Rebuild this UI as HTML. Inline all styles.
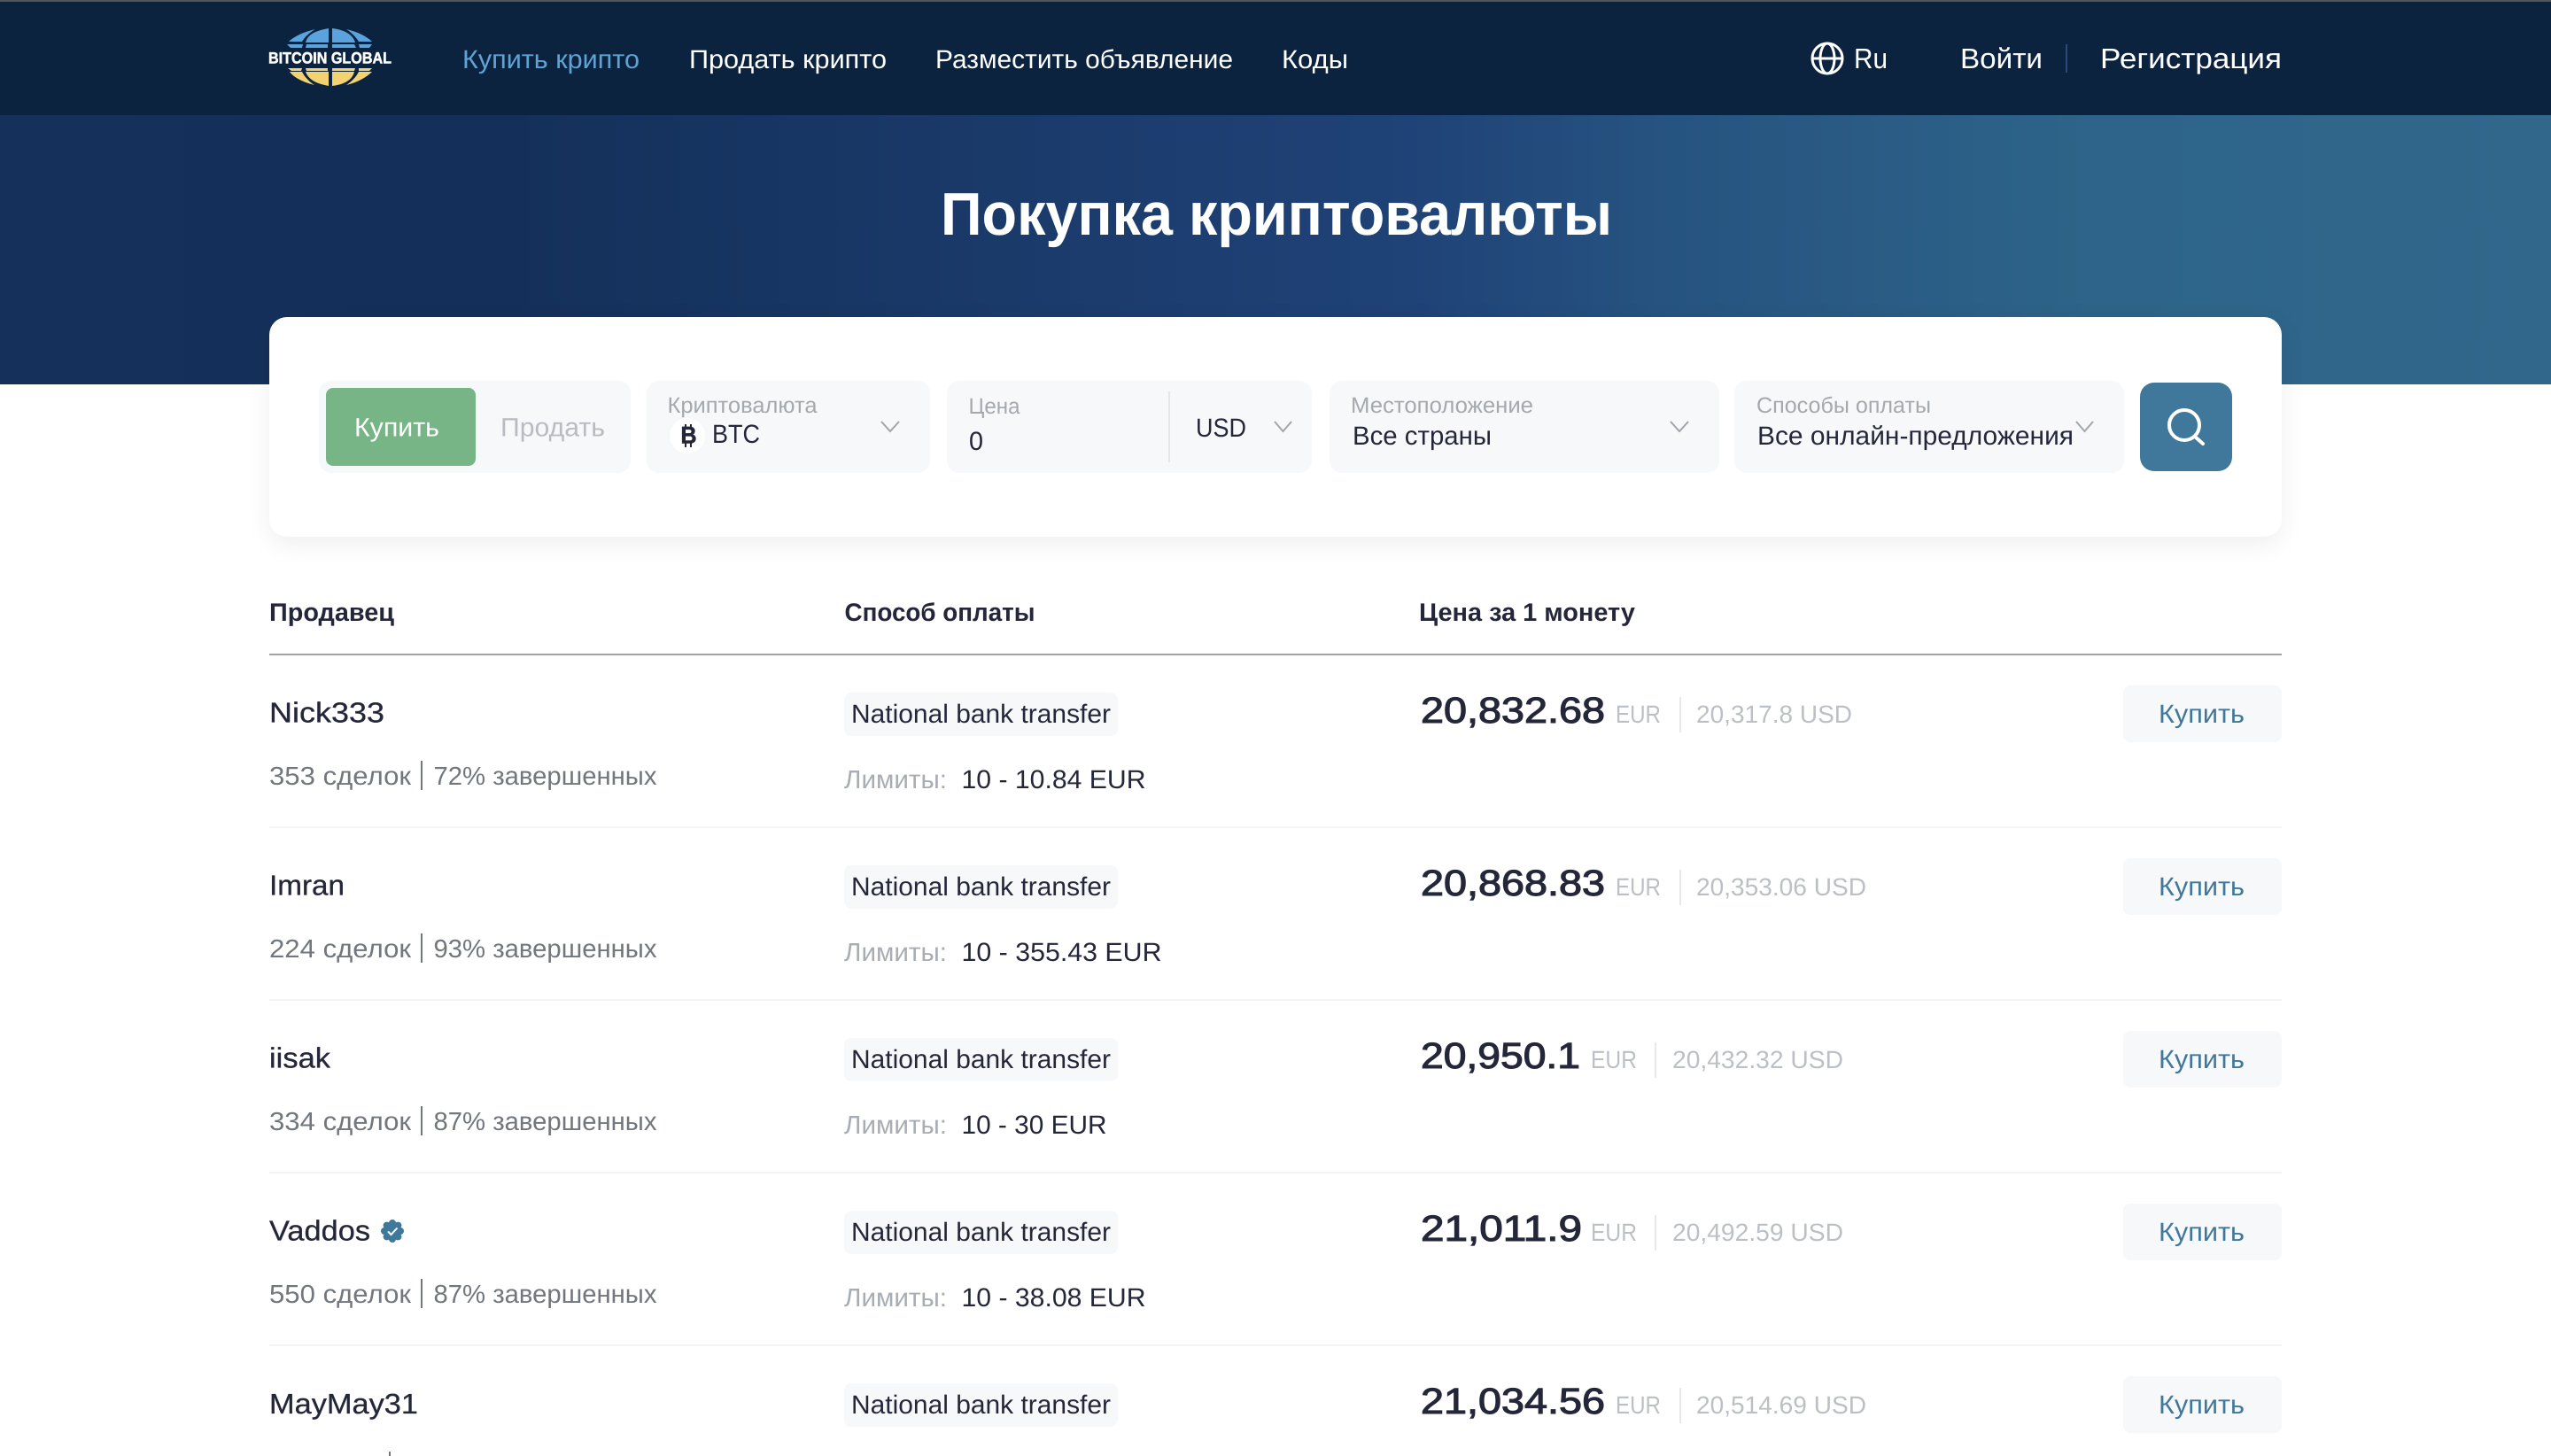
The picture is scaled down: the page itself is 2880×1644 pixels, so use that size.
<!DOCTYPE html>
<html lang="ru"><head><meta charset="utf-8"><title>Покупка криптовалюты</title>
<style>
html,body{margin:0;padding:0;background:#fff}
body{width:2880px;height:1644px;overflow:hidden;position:relative;font-family:"Liberation Sans",sans-serif}
#top{position:absolute;left:0;top:0;width:2880px;height:2px;background:#555}
#hd{position:absolute;left:0;top:2px;width:2880px;height:128px;background:#0c2340}
#hero{position:absolute;left:0;top:130px;width:2880px;height:304px;background:linear-gradient(90deg,#15315b 0%,#14305a 20%,#1f4277 55%,#265380 65%,#2e6489 82%,#30678b 100%)}
#card{position:absolute;left:304px;top:358px;width:2272px;height:248px;background:#fff;border-radius:20px;box-shadow:0 8px 30px rgba(0,0,0,.07)}
svg{position:absolute;left:0;top:0}
text{font-family:"Liberation Sans",sans-serif;text-rendering:geometricPrecision}
.nav{font-size:29.5px;fill:#fff}
.nr{font-size:32px;fill:#fff}
.lb{font-size:25px;fill:#a4a9ae}
.v{font-size:29.5px;fill:#24273a}
.th{font-size:28.5px;font-weight:700;fill:#24273a}
.nm{font-size:32px;fill:#24273a;stroke:#24273a;stroke-width:.3px}
.st{font-size:29px;fill:#72777d}
.ch{font-size:29.5px;fill:#24273a}
.lm{font-size:29px;fill:#a8adb3}
.lv{font-size:29.5px;fill:#24273a}
.pr{font-size:41px;fill:#24273a;stroke:#24273a;stroke-width:1.1px}
.cu{font-size:28px;fill:#bcc0c5}
.bt{font-size:29.5px;fill:#40789c}
.chev{fill:none;stroke:#a0a5aa;stroke-width:2}
</style></head><body>
<div id="top"></div><div id="hd"></div><div id="hero"></div><div id="card"></div>
<svg width="2880" height="1644" viewBox="0 0 2880 1644" xmlns="http://www.w3.org/2000/svg">
<!-- logo -->
<g fill="#5ba3dc">
<path d="M345 48C347 40 354 35 371 32V48Z"/><path d="M375 32C392 34 399 41 401 48H375Z"/>
<path d="M326 47C332 41 343 36 356 33C349 37 344 42 341 47Z"/><path d="M391 33C404 36 414 41 420 47H405C402 42 397 37 391 33Z"/>
<path d="M324 50H342L341 54H328Z"/><path d="M346 50H370V54H345Z"/><path d="M375 50H400L402 54H375Z"/><path d="M405 50H420L417 54H406Z"/>
</g>
<g fill="#f3d272">
<path d="M345 81C348 89 355 94 371 97V81Z"/><path d="M375 97C391 95 398 89 400 81H375Z"/>
<path d="M327 81C332 88 343 93 355 96C349 92 344 87 341 81Z"/><path d="M391 96C404 93 414 87 420 81H405C402 87 397 92 391 96Z"/>
<path d="M325 77H341L340 80H329Z"/><path d="M345 77H370V80H346Z"/><path d="M375 77H401L400 80H375Z"/><path d="M405 77H420L417 80H405Z"/>
</g>
<text x="303" y="71.500" font-size="18" font-weight="700" fill="#fff" stroke="#fff" stroke-width=".5" textLength="139" lengthAdjust="spacingAndGlyphs">BITCOIN GLOBAL</text>
<!-- nav -->
<text class="nav" x="522" y="77" style="fill:#5fa3d4" textLength="200" lengthAdjust="spacingAndGlyphs">Купить крипто</text>
<text class="nav" x="778" y="77" textLength="223" lengthAdjust="spacingAndGlyphs">Продать крипто</text>
<text class="nav" x="1056" y="77" textLength="336" lengthAdjust="spacingAndGlyphs">Разместить объявление</text>
<text class="nav" x="1447" y="77" textLength="75" lengthAdjust="spacingAndGlyphs">Коды</text>
<g fill="none" stroke="#fff" stroke-width="3"><circle cx="2063" cy="66" r="17"/><ellipse cx="2063" cy="66" rx="8" ry="17"/><path d="M2046 66H2080"/></g>
<text class="nr" x="2093" y="77" textLength="38" lengthAdjust="spacingAndGlyphs">Ru</text>
<text class="nr" x="2213" y="77" textLength="93" lengthAdjust="spacingAndGlyphs">Войти</text>
<rect x="2332" y="50" width="2" height="32" fill="#2a4a7f"/>
<text class="nr" x="2371" y="77" textLength="205" lengthAdjust="spacingAndGlyphs">Регистрация</text>
<!-- title -->
<text x="1062" y="265" font-size="68" font-weight="700" fill="#fff" textLength="758" lengthAdjust="spacingAndGlyphs">Покупка криптовалюты</text>
<!-- filter -->
<rect x="360" y="430" width="352" height="104" rx="14" fill="#f7f8fa"/>
<rect x="368" y="438" width="169" height="88" rx="8" fill="#77b586"/>
<text x="400" y="492.500" font-size="29.500" fill="#fff" textLength="96" lengthAdjust="spacingAndGlyphs">Купить</text>
<text x="565" y="492.500" font-size="29.500" fill="#b8bcc2" textLength="118" lengthAdjust="spacingAndGlyphs">Продать</text>
<rect x="730" y="430" width="320" height="104" rx="14" fill="#f7f8fa"/>
<text class="lb" x="753.500" y="466" textLength="169" lengthAdjust="spacingAndGlyphs">Криптовалюта</text>
<circle cx="776" cy="492" r="20" fill="#fff"/>
<text x="768.500" y="500.500" font-size="27" font-weight="700" fill="#24273a" stroke="#24273a" stroke-width=".6" textLength="18" lengthAdjust="spacingAndGlyphs">B</text>
<path d="M774 479V485M780 479V485M774 499V505M780 499V505" stroke="#24273a" stroke-width="2"/>
<text class="v" x="804" y="500" textLength="54" lengthAdjust="spacingAndGlyphs">BTC</text>
<path class="chev" d="M995 476L1005 487L1015 476"/>
<rect x="1069" y="430" width="412" height="104" rx="14" fill="#f7f8fa"/>
<text class="lb" x="1093.500" y="467" textLength="58" lengthAdjust="spacingAndGlyphs">Цена</text>
<text class="v" x="1094" y="508" textLength="16" lengthAdjust="spacingAndGlyphs">0</text>
<rect x="1319" y="442" width="2" height="80" fill="#e3e6ea"/>
<text class="v" x="1350" y="493" textLength="57" lengthAdjust="spacingAndGlyphs">USD</text>
<path class="chev" d="M1439 476L1448.500 487L1458 476"/>
<rect x="1501" y="430" width="440" height="104" rx="14" fill="#f7f8fa"/>
<text class="lb" x="1525" y="466" textLength="206" lengthAdjust="spacingAndGlyphs">Местоположение</text>
<text class="v" x="1527" y="502" textLength="157" lengthAdjust="spacingAndGlyphs">Все страны</text>
<path class="chev" d="M1886 476L1896 487L1906 476"/>
<rect x="1958" y="430" width="440" height="104" rx="14" fill="#f7f8fa"/>
<text class="lb" x="1983" y="466" textLength="197" lengthAdjust="spacingAndGlyphs">Способы оплаты</text>
<text class="v" x="1984" y="502" textLength="357" lengthAdjust="spacingAndGlyphs">Все онлайн-предложения</text>
<path class="chev" d="M2344 476L2353.500 487L2363 476"/>
<rect x="2416" y="432" width="104" height="100" rx="16" fill="#40789c"/>
<circle cx="2466" cy="480" r="17" fill="none" stroke="#fff" stroke-width="4"/>
<path d="M2478 493L2487 501" stroke="#fff" stroke-width="4" stroke-linecap="round"/>
<!-- table head -->
<text class="th" x="304" y="701" textLength="141" lengthAdjust="spacingAndGlyphs">Продавец</text>
<text class="th" x="953.500" y="701" textLength="215" lengthAdjust="spacingAndGlyphs">Способ оплаты</text>
<text class="th" x="1602" y="701" textLength="244" lengthAdjust="spacingAndGlyphs">Цена за 1 монету</text>
<rect x="304" y="738" width="2272" height="2" fill="#a0a4a8"/>
<!-- row 1 -->
<g>
<text class="nm" x="304" y="815.500" textLength="130" lengthAdjust="spacingAndGlyphs">Nick333</text>
<text class="st" x="304" y="886" textLength="160" lengthAdjust="spacingAndGlyphs">353 сделок</text><rect x="475" y="859" width="2" height="33" fill="#72777d"/><text class="st" x="489.500" y="886" textLength="252" lengthAdjust="spacingAndGlyphs">72% завершенных</text>
<rect x="953" y="782" width="309" height="49" rx="8" fill="#f7f8fa"/><text class="ch" x="961" y="816" textLength="293" lengthAdjust="spacingAndGlyphs">National bank transfer</text>
<text class="lm" x="953" y="890" textLength="116" lengthAdjust="spacingAndGlyphs">Лимиты:</text><text class="lv" x="1085.500" y="890" textLength="208" lengthAdjust="spacingAndGlyphs">10 - 10.84 EUR</text>
<text class="pr" x="1604" y="816" textLength="208" lengthAdjust="spacingAndGlyphs">20,832.68</text><text class="cu" x="1824" y="816" textLength="51" lengthAdjust="spacingAndGlyphs">EUR</text><rect x="1896" y="787" width="2" height="40" fill="#e6e8ea"/><text class="cu" x="1915" y="816" textLength="176" lengthAdjust="spacingAndGlyphs">20,317.8 USD</text>
<rect x="2397" y="774" width="179" height="64" rx="8" fill="#f7f8fa"/><text class="bt" x="2437" y="816" textLength="97" lengthAdjust="spacingAndGlyphs">Купить</text>
<rect x="304" y="933" width="2272" height="2" fill="#f4f5f6"/>
</g>
<!-- row 2 -->
<g transform="translate(0,195)">
<text class="nm" x="304" y="815.500" textLength="85" lengthAdjust="spacingAndGlyphs">Imran</text>
<text class="st" x="304" y="886" textLength="160" lengthAdjust="spacingAndGlyphs">224 сделок</text><rect x="475" y="859" width="2" height="33" fill="#72777d"/><text class="st" x="489.500" y="886" textLength="252" lengthAdjust="spacingAndGlyphs">93% завершенных</text>
<rect x="953" y="782" width="309" height="49" rx="8" fill="#f7f8fa"/><text class="ch" x="961" y="816" textLength="293" lengthAdjust="spacingAndGlyphs">National bank transfer</text>
<text class="lm" x="953" y="890" textLength="116" lengthAdjust="spacingAndGlyphs">Лимиты:</text><text class="lv" x="1085.500" y="890" textLength="226" lengthAdjust="spacingAndGlyphs">10 - 355.43 EUR</text>
<text class="pr" x="1604" y="816" textLength="208" lengthAdjust="spacingAndGlyphs">20,868.83</text><text class="cu" x="1824" y="816" textLength="51" lengthAdjust="spacingAndGlyphs">EUR</text><rect x="1896" y="787" width="2" height="40" fill="#e6e8ea"/><text class="cu" x="1915" y="816" textLength="192" lengthAdjust="spacingAndGlyphs">20,353.06 USD</text>
<rect x="2397" y="774" width="179" height="64" rx="8" fill="#f7f8fa"/><text class="bt" x="2437" y="816" textLength="97" lengthAdjust="spacingAndGlyphs">Купить</text>
<rect x="304" y="933" width="2272" height="2" fill="#f4f5f6"/>
</g>
<!-- row 3 -->
<g transform="translate(0,390)">
<text class="nm" x="304" y="815.500" textLength="69" lengthAdjust="spacingAndGlyphs">iisak</text>
<text class="st" x="304" y="886" textLength="160" lengthAdjust="spacingAndGlyphs">334 сделок</text><rect x="475" y="859" width="2" height="33" fill="#72777d"/><text class="st" x="489.500" y="886" textLength="252" lengthAdjust="spacingAndGlyphs">87% завершенных</text>
<rect x="953" y="782" width="309" height="49" rx="8" fill="#f7f8fa"/><text class="ch" x="961" y="816" textLength="293" lengthAdjust="spacingAndGlyphs">National bank transfer</text>
<text class="lm" x="953" y="890" textLength="116" lengthAdjust="spacingAndGlyphs">Лимиты:</text><text class="lv" x="1085.500" y="890" textLength="164" lengthAdjust="spacingAndGlyphs">10 - 30 EUR</text>
<text class="pr" x="1604" y="816" textLength="180" lengthAdjust="spacingAndGlyphs">20,950.1</text><text class="cu" x="1796" y="816" textLength="52" lengthAdjust="spacingAndGlyphs">EUR</text><rect x="1868" y="787" width="2" height="40" fill="#e6e8ea"/><text class="cu" x="1888" y="816" textLength="193" lengthAdjust="spacingAndGlyphs">20,432.32 USD</text>
<rect x="2397" y="774" width="179" height="64" rx="8" fill="#f7f8fa"/><text class="bt" x="2437" y="816" textLength="97" lengthAdjust="spacingAndGlyphs">Купить</text>
<rect x="304" y="933" width="2272" height="2" fill="#f4f5f6"/>
</g>
<!-- row 4 -->
<g transform="translate(0,585)">
<text class="nm" x="304" y="815.500" textLength="114" lengthAdjust="spacingAndGlyphs">Vaddos</text>
<g fill="#40789c"><circle cx="443" cy="805" r="10.500"/><circle cx="443" cy="796" r="4"/><circle cx="443" cy="814" r="4"/><circle cx="434" cy="805" r="4"/><circle cx="452" cy="805" r="4"/><circle cx="436.600" cy="798.600" r="4"/><circle cx="449.400" cy="798.600" r="4"/><circle cx="436.600" cy="811.400" r="4"/><circle cx="449.400" cy="811.400" r="4"/></g>
<path d="M438 805.500L441.500 809L448.500 801.500" fill="none" stroke="#fff" stroke-width="2"/>
<text class="st" x="304" y="886" textLength="160" lengthAdjust="spacingAndGlyphs">550 сделок</text><rect x="475" y="859" width="2" height="33" fill="#72777d"/><text class="st" x="489.500" y="886" textLength="252" lengthAdjust="spacingAndGlyphs">87% завершенных</text>
<rect x="953" y="782" width="309" height="49" rx="8" fill="#f7f8fa"/><text class="ch" x="961" y="816" textLength="293" lengthAdjust="spacingAndGlyphs">National bank transfer</text>
<text class="lm" x="953" y="890" textLength="116" lengthAdjust="spacingAndGlyphs">Лимиты:</text><text class="lv" x="1085.500" y="890" textLength="208" lengthAdjust="spacingAndGlyphs">10 - 38.08 EUR</text>
<text class="pr" x="1604" y="816" textLength="182" lengthAdjust="spacingAndGlyphs">21,011.9</text><text class="cu" x="1796" y="816" textLength="52" lengthAdjust="spacingAndGlyphs">EUR</text><rect x="1868" y="787" width="2" height="40" fill="#e6e8ea"/><text class="cu" x="1888" y="816" textLength="193" lengthAdjust="spacingAndGlyphs">20,492.59 USD</text>
<rect x="2397" y="774" width="179" height="64" rx="8" fill="#f7f8fa"/><text class="bt" x="2437" y="816" textLength="97" lengthAdjust="spacingAndGlyphs">Купить</text>
<rect x="304" y="933" width="2272" height="2" fill="#f4f5f6"/>
</g>
<!-- row 5 -->
<g transform="translate(0,780)">
<text class="nm" x="304" y="816" textLength="168" lengthAdjust="spacingAndGlyphs">MayMay31</text>
<rect x="439" y="859" width="2" height="33" fill="#72777d"/>
<rect x="953" y="782" width="309" height="49" rx="8" fill="#f7f8fa"/><text class="ch" x="961" y="816" textLength="293" lengthAdjust="spacingAndGlyphs">National bank transfer</text>
<text class="pr" x="1604" y="816" textLength="208" lengthAdjust="spacingAndGlyphs">21,034.56</text><text class="cu" x="1824" y="816" textLength="51" lengthAdjust="spacingAndGlyphs">EUR</text><rect x="1896" y="787" width="2" height="40" fill="#e6e8ea"/><text class="cu" x="1915" y="816" textLength="192" lengthAdjust="spacingAndGlyphs">20,514.69 USD</text>
<rect x="2397" y="774" width="179" height="64" rx="8" fill="#f7f8fa"/><text class="bt" x="2437" y="816" textLength="97" lengthAdjust="spacingAndGlyphs">Купить</text>
</g>
</svg>
</body></html>
